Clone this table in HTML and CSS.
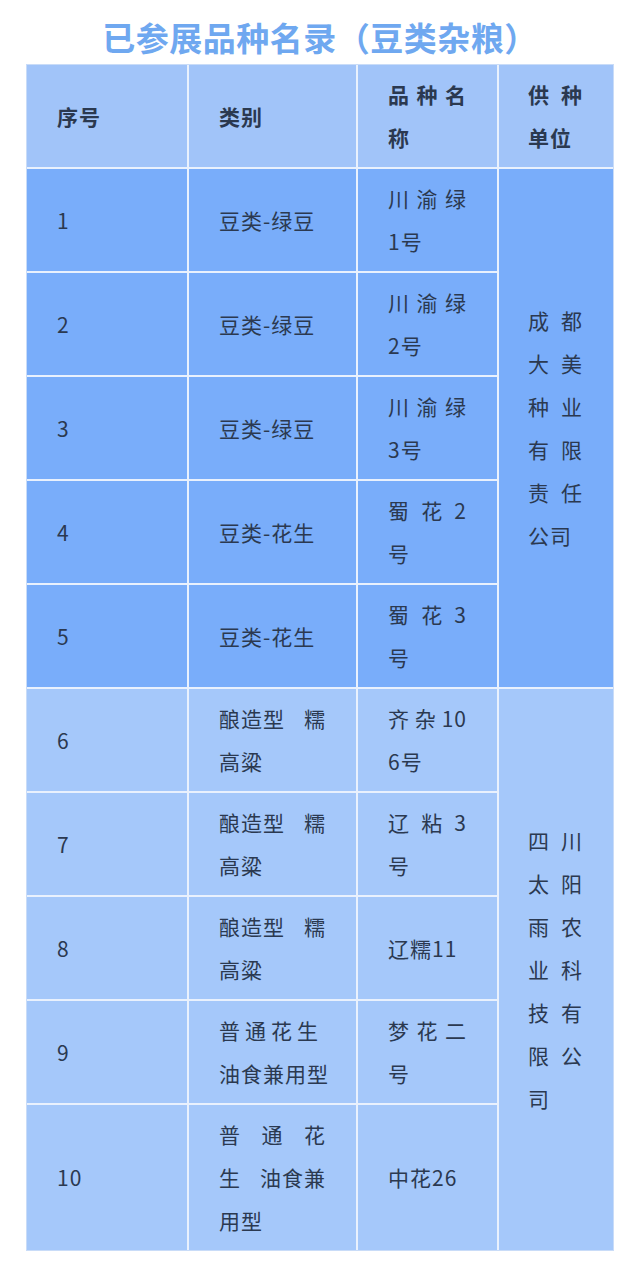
FILE: index.html
```html
<!DOCTYPE html>
<html lang="zh-CN">
<head>
<meta charset="utf-8">
<title>已参展品种名录（豆类杂粮）</title>
<link rel="stylesheet" href="styles.css">
</head>
<body>
<h1 class="title">已参展品种名录（豆类杂粮）</h1>
<table class="list">
  <colgroup>
    <col class="w1"><col class="w2"><col class="w3"><col class="w4">
  </colgroup>
  <thead>
    <tr class="head">
      <td class="c1">序号</td>
      <td class="c2">类别</td>
      <td class="c3"><div class="j"><span>品</span><span>种</span><span>名</span></div><div>称</div></td>
      <td class="c4"><div class="j"><span>供</span><span>种</span></div><div>单位</div></td>
    </tr>
  </thead>
  <tbody>
    <tr class="dark">
      <td class="c1">1</td>
      <td class="c2">豆类-绿豆</td>
      <td class="c3"><div class="j"><span>川</span><span>渝</span><span>绿</span></div><div>1号</div></td>
      <td class="c4" rowspan="5">
        <div class="j"><span>成</span><span>都</span></div>
        <div class="j"><span>大</span><span>美</span></div>
        <div class="j"><span>种</span><span>业</span></div>
        <div class="j"><span>有</span><span>限</span></div>
        <div class="j"><span>责</span><span>任</span></div>
        <div>公司</div>
      </td>
    </tr>
    <tr class="dark">
      <td class="c1">2</td>
      <td class="c2">豆类-绿豆</td>
      <td class="c3"><div class="j"><span>川</span><span>渝</span><span>绿</span></div><div>2号</div></td>
    </tr>
    <tr class="dark">
      <td class="c1">3</td>
      <td class="c2">豆类-绿豆</td>
      <td class="c3"><div class="j"><span>川</span><span>渝</span><span>绿</span></div><div>3号</div></td>
    </tr>
    <tr class="dark">
      <td class="c1">4</td>
      <td class="c2">豆类-花生</td>
      <td class="c3"><div class="j"><span>蜀</span><span>花</span><span>2</span></div><div>号</div></td>
    </tr>
    <tr class="dark">
      <td class="c1">5</td>
      <td class="c2">豆类-花生</td>
      <td class="c3"><div class="j"><span>蜀</span><span>花</span><span>3</span></div><div>号</div></td>
    </tr>
    <tr class="light">
      <td class="c1">6</td>
      <td class="c2"><div class="j"><span>酿造型</span><span>糯</span></div><div>高粱</div></td>
      <td class="c3"><div class="j"><span>齐</span><span>杂</span><span>10</span></div><div>6号</div></td>
      <td class="c4 last" rowspan="5">
        <div class="j"><span>四</span><span>川</span></div>
        <div class="j"><span>太</span><span>阳</span></div>
        <div class="j"><span>雨</span><span>农</span></div>
        <div class="j"><span>业</span><span>科</span></div>
        <div class="j"><span>技</span><span>有</span></div>
        <div class="j"><span>限</span><span>公</span></div>
        <div>司</div>
      </td>
    </tr>
    <tr class="light">
      <td class="c1">7</td>
      <td class="c2"><div class="j"><span>酿造型</span><span>糯</span></div><div>高粱</div></td>
      <td class="c3"><div class="j"><span>辽</span><span>粘</span><span>3</span></div><div>号</div></td>
    </tr>
    <tr class="light">
      <td class="c1">8</td>
      <td class="c2"><div class="j"><span>酿造型</span><span>糯</span></div><div>高粱</div></td>
      <td class="c3">辽糯11</td>
    </tr>
    <tr class="light">
      <td class="c1">9</td>
      <td class="c2"><div class="j short"><span>普</span><span>通</span><span>花</span><span>生</span></div><div>油食兼用型</div></td>
      <td class="c3"><div class="j"><span>梦</span><span>花</span><span>二</span></div><div>号</div></td>
    </tr>
    <tr class="light last">
      <td class="c1">10</td>
      <td class="c2"><div class="j"><span>普</span><span>通</span><span>花</span></div><div class="j"><span>生</span><span>油食兼</span></div><div>用型</div></td>
      <td class="c3">中花26</td>
    </tr>
  </tbody>
</table>
</body>
</html>
```
FILE: styles.css
```css
html, body {
  margin: 0;
  padding: 0;
  background: #ffffff;
}

body {
  font-family: "Noto Sans CJK SC", "Noto Sans", sans-serif;
  color: #2b3950;
}

.title {
  margin: 14px 0 4px;
  font-size: 33px;
  line-height: 46px;
  font-weight: 700;
  text-align: center;
  color: #6fa8f0;
  letter-spacing: 0.5px;
}

.list {
  margin: 0 auto;
  width: 588px;
  table-layout: fixed;
  border-collapse: separate;
  border-spacing: 0;
  border: 1px solid #c9dcf8;
}

.w1 { width: 162px; }
.w2 { width: 169px; }
.w3 { width: 141px; }
.w4 { width: 114px; }

.list td {
  padding: 8px 0 8px 30px;
  font-size: 21px;
  line-height: 43px;
  letter-spacing: 1px;
  vertical-align: middle;
  text-align: left;
  border-right: 2px solid #e9f1fd;
  border-bottom: 2px solid #e9f1fd;
  white-space: nowrap;
}

.list td.c4 {
  border-right: none;
  padding-left: 29px;
}

.list tr.last td,
.list td.c4.last {
  border-bottom: none;
}

.head td {
  background: #a1c4f9;
  font-weight: 700;
}

.dark td {
  background: #79adfa;
}

.light td {
  background: #a5c8fa;
}

.j {
  display: flex;
  justify-content: space-between;
}

.c2 .j { width: 107px; }
.c2 .j.short { width: 100px; }
.c3 .j { width: 79px; }
.c4 .j { width: 55px; }
```
